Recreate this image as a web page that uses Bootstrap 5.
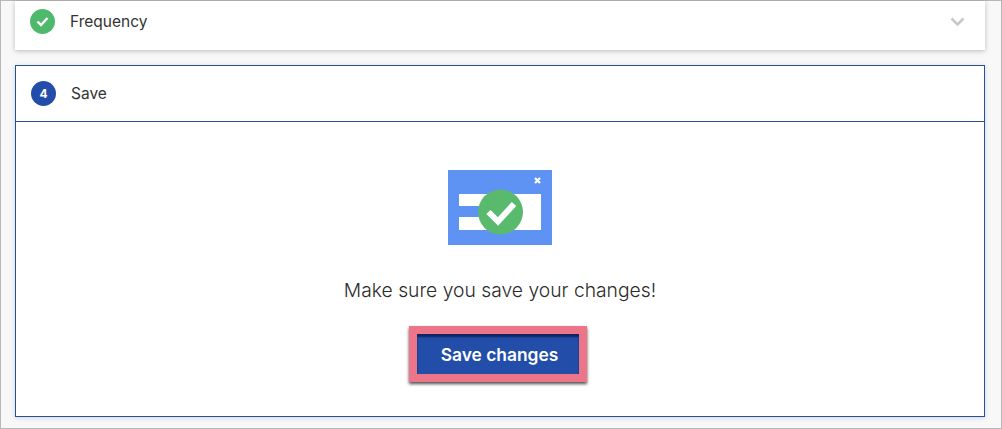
<!DOCTYPE html>
<html lang="en">
<head>
  <meta charset="UTF-8" />
  <title>Save</title>
  <link href="https://cdn.jsdelivr.net/npm/bootstrap@5.3.0/dist/css/bootstrap.min.css" rel="stylesheet" />
  <style>
    html, body { height: 429px; overflow: hidden; }
    body { font-family: Inter, "Liberation Sans", sans-serif; background: #f8f8f8; color: #333; }
    .page-frame { height: 429px; border: 1px solid #b8b8b8; padding: 0 16px 0 14px; }
    .step-closed { height: 49px; background: #fff; box-shadow: 0 1px 5px rgba(0,0,0,.25); padding: 0 20px 8px 15px; margin-bottom: 15px; }
    .step-open { height: 352px; background: #fff; border: 1px solid #2a5189; box-shadow: 0 1px 5px rgba(34,78,170,.2); }
    .step-head { height: 56px; border-bottom: 1px solid #2a5189; padding-left: 15px; }
    .step-title { font-size: 15.5px; line-height: 20px; margin-left: -1px; }
    .step-dot { width: 25px; height: 25px; border-radius: 50%; flex: none; }
    .dot-done { background: #4fb96b; }
    .dot-num { background: #224eaa; color: #fff; font-size: 12px; font-weight: 700; }
    .step-body { padding-top: 48px; }
    .save-msg { font-size: 19.3px; font-weight: 300; line-height: 28px; color: #2b2b2b; margin: 31px 0 22px; }
    .save-btn { width: 178px; height: 56px; padding: 2px 0 0 3px; border: 8px solid #ec758a; border-radius: 0; background: #224eaa; color: #fff; font-size: 17.4px; font-weight: 600; box-shadow: inset 0 3px 2px #0d2560, 0 2px 3px rgba(0,0,0,.7); }
  </style>
</head>
<body>
  <div class="page-frame">
    <div class="step-closed d-flex align-items-center gap-3">
      <span class="step-dot dot-done d-flex align-items-center justify-content-center">
        <svg width="13" height="11" viewBox="0 0 13 11"><path d="M1.5 5.5 5 9l6.5-7" fill="none" stroke="#fff" stroke-width="2.4"/></svg>
      </span>
      <span class="step-title flex-grow-1">Frequency</span>
      <svg width="15" height="10" viewBox="0 0 15 10"><path d="M1.5 1.5 7.5 7.5l6-6" fill="none" stroke="#c8c8c8" stroke-width="2.6"/></svg>
    </div>

    <div class="step-open">
      <div class="step-head d-flex align-items-center gap-3">
        <span class="step-dot dot-num d-flex align-items-center justify-content-center">4</span>
        <span class="step-title">Save</span>
      </div>
      <div class="step-body text-center">
        <svg class="d-block mx-auto" width="104" height="75" viewBox="0 0 104 75">
          <rect width="104" height="75" fill="#5f93f3"/>
          <rect x="11" y="24" width="82" height="12" fill="#fff"/>
          <rect x="11" y="47" width="82" height="13" fill="#fff"/>
          <rect x="35" y="36" width="58" height="11" fill="#fff"/>
          <circle cx="52.5" cy="42" r="22.5" fill="#59b96d"/>
          <path d="M40.5 42l9.500 9.500 16-17.500" fill="none" stroke="#fff" stroke-width="6"/>
          <path d="M87 8l5 5M92 8l-5 5" stroke="#fff" stroke-width="2.2"/>
        </svg>
        <p class="save-msg">Make sure you save your changes!</p>
        <button type="button" class="btn save-btn me-1">Save changes</button>
      </div>
    </div>
  </div>
  <script src="https://cdn.jsdelivr.net/npm/bootstrap@5.3.0/dist/js/bootstrap.bundle.min.js"></script>
</body>
</html>
